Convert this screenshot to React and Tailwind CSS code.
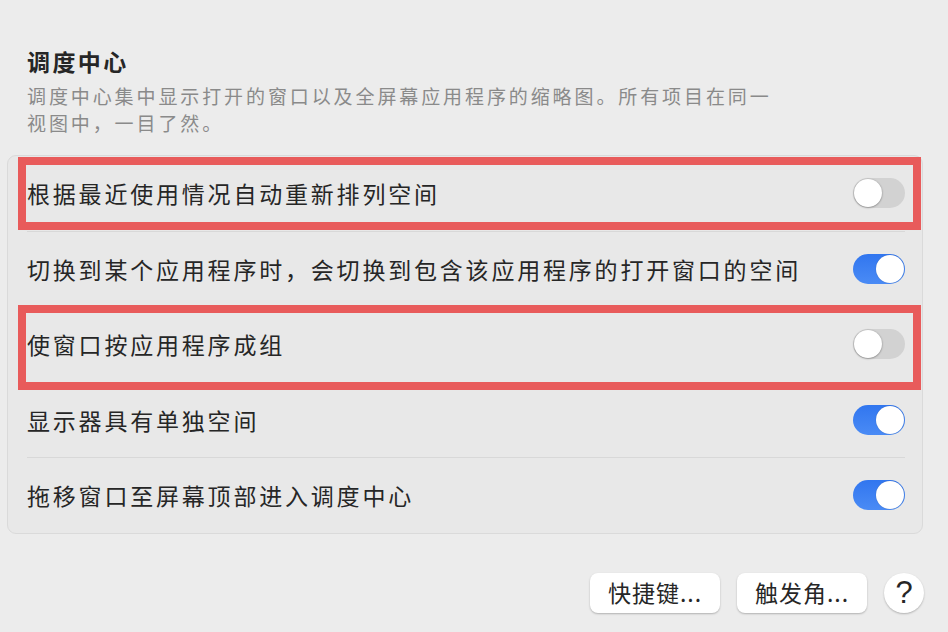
import { Fragment } from "react";

const rows = [
  { label: "根据最近使用情况自动重新排列空间", on: false, mark: "top-[1px] bottom-[1px]" },
  { label: "切换到某个应用程序时，会切换到包含该应用程序的打开窗口的空间", on: true },
  { label: "使窗口按应用程序成组", on: false, mark: "top-[-2px] bottom-[-8px]" },
  { label: "显示器具有单独空间", on: true },
  { label: "拖移窗口至屏幕顶部进入调度中心", on: true },
];

function Toggle({ on }) {
  return on ? (
    <div className="w-[52px] h-[30px] rounded-full bg-linear-to-b from-[#3176ef] to-[#4a8bf5] flex items-center justify-end pr-[1px]">
      <div className="w-[28px] h-[28px] rounded-full bg-white shadow-[0_0_1px_rgba(0,0,0,0.3)]" />
    </div>
  ) : (
    <div className="w-[52px] h-[30px] rounded-full bg-[#d2d2d2] flex items-center pl-[1px]">
      <div className="w-[28px] h-[28px] rounded-full bg-white shadow-[0_0.5px_2px_rgba(0,0,0,0.45)]" />
    </div>
  );
}

export default function App() {
  return (
    <div className="w-[948px] h-[632px] bg-[#ececec] overflow-hidden font-['Noto_Sans_CJK_SC',sans-serif] text-[#262626]">
      {/* header */}
      <div className="pl-[27px] pt-[46px]">
        <h1 className="text-[23px] leading-[30px] font-bold tracking-[2.4px]">调度中心</h1>
        <p className="mt-[6px] text-[19px] leading-[27px] text-[#8a8a8a] tracking-[2.9px] w-[756px]">
          调度中心集中显示打开的窗口以及全屏幕应用程序的缩略图。所有项目在同一视图中，一目了然。
        </p>
      </div>

      {/* settings card */}
      <div className="mt-[19px] mx-[7px] w-[916px] rounded-[9px] border border-[#dadada] bg-[#e8e8e8]">
        {rows.map((row, i) => (
          <Fragment key={i}>
            {i > 0 && <div className="h-px ml-[19px] mr-[17px] bg-[#d8d8d8]" />}
            <div className="relative h-[74.5px] flex items-center justify-between pl-[19px] pr-[17px]">
              <span className="text-[23px] tracking-[2.8px]">{row.label}</span>
              <Toggle on={row.on} />
              {row.mark && (
                <div
                  className={`absolute left-[10px] right-[1px] ${row.mark} border-[8px] border-[#e85b5b] pointer-events-none`}
                />
              )}
            </div>
          </Fragment>
        ))}
      </div>

      {/* buttons */}
      <div className="mt-[39px] pr-[24px] flex justify-end items-center gap-[17px]">
        <button className="w-[130px] h-[40px] rounded-[8px] bg-white shadow-[0_1px_2px_rgba(0,0,0,0.25)] text-[23px] tracking-[1px]">
          快捷键...
        </button>
        <button className="w-[130px] h-[40px] rounded-[8px] bg-white shadow-[0_1px_2px_rgba(0,0,0,0.25)] text-[23px] tracking-[1px]">
          触发角...
        </button>
        <button className="w-[40px] h-[40px] rounded-full bg-white shadow-[0_1px_2px_rgba(0,0,0,0.25)] text-[31px] leading-none font-['Liberation_Sans',sans-serif] flex items-center justify-center">
          ?
        </button>
      </div>
    </div>
  );
}
